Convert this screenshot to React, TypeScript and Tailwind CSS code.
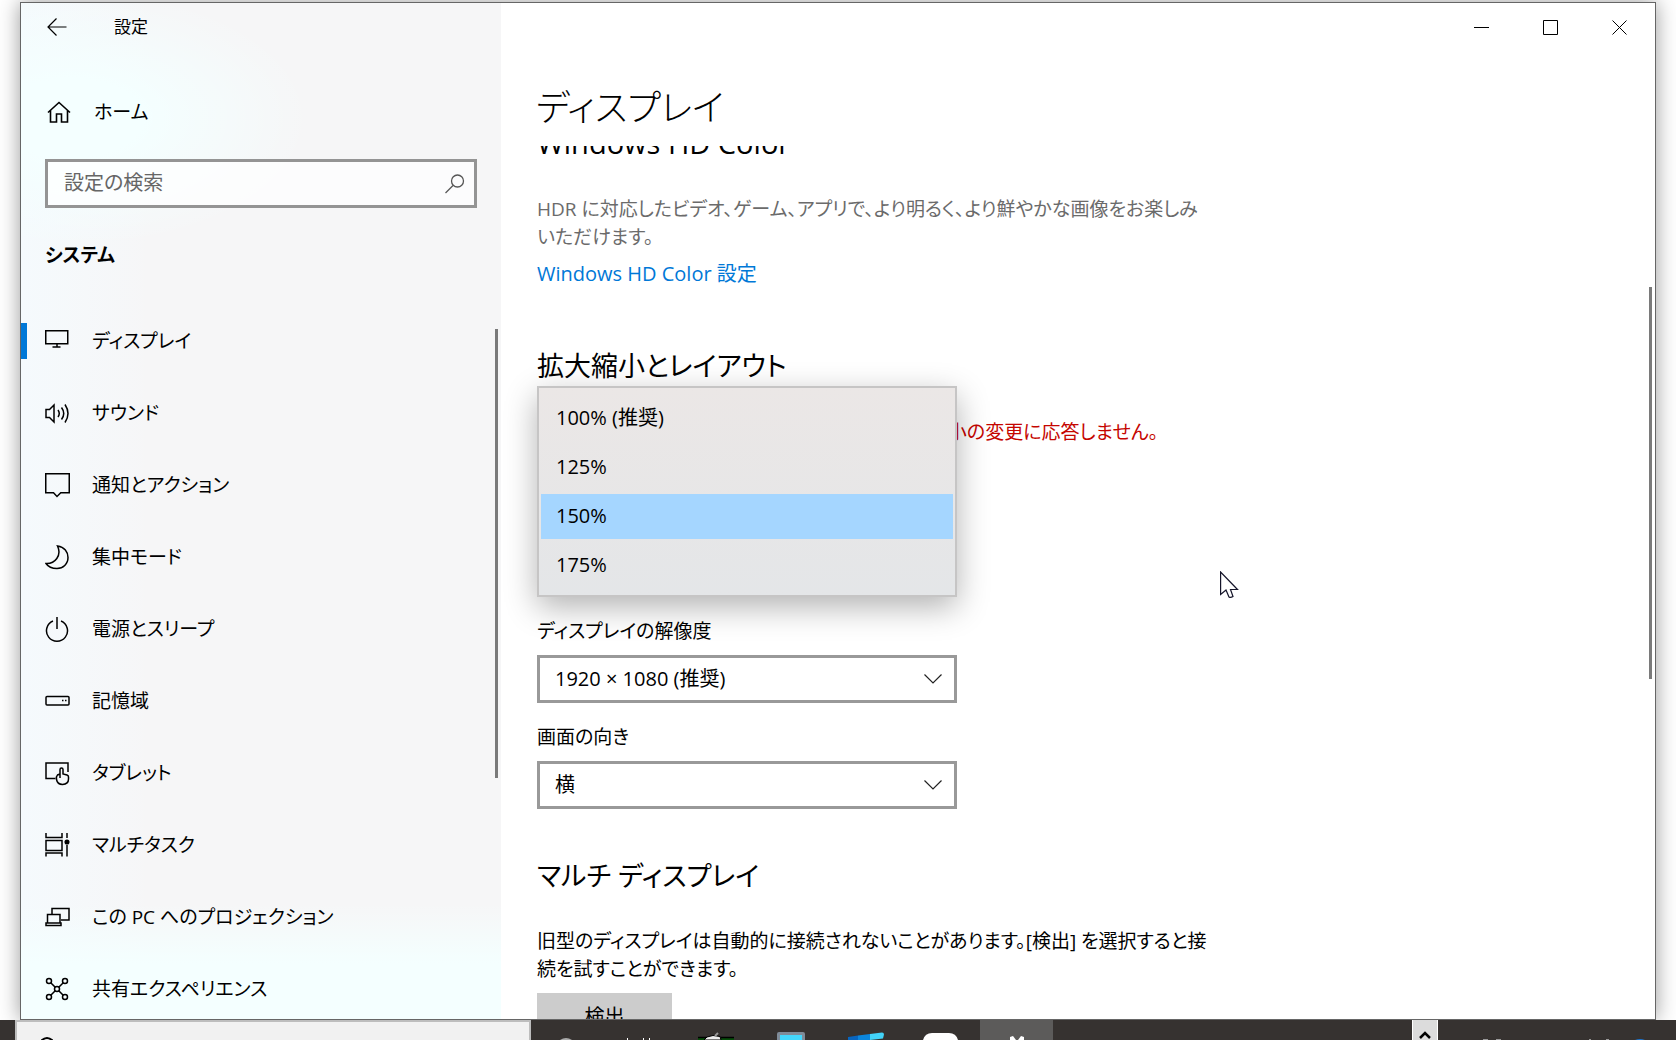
import React from "react";

const nav: [string, React.ReactNode][] = [
  ["ディスプレイ", <><path d="M.75 1.750h22v13h-22zM12 15v3M7.500 18h8" /></>],
  ["サウンド", <><path d="M1 8.500h3.500L9 4v17l-4.500-4.500H1z" /><path d="M13 9q2.500 3.500 0 7M16.500 6.500q4.500 6 0 12M20 3.500q6 9 0 18" /></>],
  ["通知とアクション", <path d="M.75.750h23.500v19h-8.500L12 23.500l-3.500-3.750H.75z" />],
  ["集中モード", <path d="M12.500 1C19.500 2 23 7 23 12.500 23 19 18 23.500 12 23.500 7 23.500 3 21.500 1 18.500 10 19 17 10.500 12.500 1z" />],
  ["電源とスリープ", <path d="M12 0v12M8 4a10.500 10.500 0 1 0 8 0" />],
  ["記憶域", <><rect x="1" y="7.500" width="23" height="8.500" rx="1" /><path d="M17 11.500h1.500M20 11.500h1.500" /></>],
  ["タブレット", <><path d="M10.500 17.500H1V2h22v9" /><path d="M15 17V8.500q0-1.500 1.500-1.500T18 8.500V13l4 1q1.500.5 1.500 2v2q0 5-6 5.500-5 0-6-5-.5-3 1-4.500l2.500-1" /></>],
  ["マルチタスク", <><path d="M1 0v4.500h16V0M1 7.500h16v10H1zM1 23.500V20h16v3.500M22 0v5M22 12v11.500" /><circle cx="22" cy="9" r="1.800" fill="currentColor" /></>],
  ["この PC へのプロジェクション", <><path d="M7 9V3.500h17V15h-8" /><path d="M2.500 18V9.500H15V18M1 18h15v2.500H1z" /></>],
  ["共有エクスペリエンス", <><path d="M5.500 5.500l13 13M18.500 5.500l-13 13" /><g fill="#f7feff"><circle cx="4" cy="4" r="2.500" /><circle cx="20" cy="4" r="2.500" /><circle cx="4" cy="20" r="2.500" /><circle cx="20" cy="20" r="2.500" /><circle cx="12" cy="12" r="2.500" /></g></>],
];

function Icon({ children }: { children: React.ReactNode }) {
  return (
    <svg aria-hidden="true" viewBox="0 0 25 25" className="size-[25px]" fill="none" stroke="currentColor" strokeWidth="1.500">
      {children}
    </svg>
  );
}

function Combo({ id, label, value }: { id: string; label: string; value: string }) {
  return (
    <div className="flex flex-col">
      <label htmlFor={id} className="h-7 text-[19px] leading-7">{label}</label>
      <div className="relative mt-2.5">
        <select id={id} className="block h-12 w-full appearance-none border-[3px] border-[#999] bg-white pl-[15px] outline-none">
          <option>{value}</option>
        </select>
        <svg aria-hidden="true" viewBox="0 0 18 10" className="pointer-events-none absolute right-[15px] top-[19px] h-2.5 w-[18px]" fill="none" stroke="#222" strokeWidth="1.200">
          <path d="M.5.500 9 9l8.500-8.500" />
        </svg>
      </div>
    </div>
  );
}

function Sidebar() {
  return (
    <aside className="flex w-[480px] shrink-0 flex-col bg-[#f6f6f7] bg-[radial-gradient(ellipse_240px_130px_at_50px_115px,#f4ffff_30%,transparent),linear-gradient(to_bottom,transparent_900px,#f4ffff_960px),linear-gradient(to_right,#f5fafd,transparent_130px)]">
      <header className="flex h-12 items-center pl-[26px]">
        <button aria-label="戻る">
          <svg viewBox="0 0 20 18" className="h-[18px] w-5" fill="none" stroke="black" strokeWidth="1.200"><path d="M19.500 9H1M9.500.5 1 9l8.500 8.500" /></svg>
        </button>
        <h1 className="ml-[47px] text-[17px] leading-6">設定</h1>
      </header>
      <a href="#home" className="mt-[37px] flex h-12 items-center gap-[23px] pl-[26px] text-[19px]">
        <svg aria-hidden="true" viewBox="0 0 24 22" className="h-[22px] w-6" fill="none" stroke="black" strokeWidth="1.600"><path d="M1 11.500 12 1.500l11 10M3.500 9.500V21h6v-8h5v8h6V9.500" /></svg>
        ホーム
      </a>
      <div className="relative mx-6 mt-[23px]">
        <input aria-label="設定の検索" placeholder="設定の検索" className="block h-[49px] w-full border-[3px] border-[#949494] bg-white/70 pb-0.5 pl-4 placeholder-[#666] outline-none" />
        <svg aria-hidden="true" viewBox="0 0 20 20" className="absolute right-3 top-[15px] size-5" fill="none" stroke="#555" strokeWidth="1.300"><circle cx="12.500" cy="7" r="6" /><path d="M8 11.500.5 19" /></svg>
      </div>
      <h2 className="mt-[33px] pl-6 text-[19px] font-bold leading-7">システム</h2>
      <div className="mt-9 flex min-h-0 flex-1 items-start">
        <nav className="flex-1 text-[19px]">
          {nav.map(([label, icon], i) => (
            <a key={label} href="#page" aria-current={i === 0 ? "page" : undefined} className="flex h-[72px] items-center">
              <span className={i === 0 ? "h-9 w-1.5 bg-[#0078d7]" : "h-9 w-1.5"} />
              <span className="ml-[18px] mr-[22px]"><Icon>{icon}</Icon></span>
              {label}
            </a>
          ))}
        </nav>
        <div className="mr-[3px] mt-6 h-[449px] w-[3px] bg-[#7a7a7a]" />
      </div>
    </aside>
  );
}

function ScalePopup() {
  return (
    <ul role="listbox" aria-label="拡大縮小" className="absolute inset-x-0 top-0 z-10 flex h-[211px] flex-col gap-1 border-2 border-[#c6c5c5] bg-linear-to-b from-[#ebe7e6] to-[#e4e6e8] px-0.5 pt-2 shadow-[0_10px_30px_rgba(0,0,0,0.3)]">
      {["100% (推奨)", "125%", "150%", "175%"].map((v) => (
        <li key={v} role="option" aria-selected={v === "150%"} className={v === "150%" ? "bg-[#a5d6ff]" : ""}>
          <button className="block h-[45px] w-full pb-0.5 pl-[15px] text-left">{v}</button>
        </li>
      ))}
    </ul>
  );
}

function Content() {
  return (
    <main className="flex min-w-0 flex-1 flex-col bg-white">
      <header className="mr-px flex h-12 justify-end">
        {[
          ["最小化", "M0 7.500h15"],
          ["最大化", "M.5.500h14v14H.5z"],
          ["閉じる", "M.5.500l14 14M14.500.500l-14 14"],
        ].map(([label, d]) => (
          <button key={label} aria-label={label} className="flex w-[69px] items-center justify-center">
            <svg viewBox="0 0 15 15" className="size-[15px]" fill="none" stroke="black"><path d={d} /></svg>
          </button>
        ))}
      </header>
      <h2 className="mt-8 h-[63px] pl-[35px] text-[36px] font-light leading-[50px]">ディスプレイ</h2>
      <div className="flex min-h-0 flex-1 items-start justify-between overflow-hidden">
        <div className="flex flex-col pl-9">
          <h3 className="-mt-[18px] h-[30px] text-[29px] leading-[30px]">Windows HD Color</h3>
          <p className="mt-[37px] text-[19px] leading-7 text-[#6b6b6b]">
            HDR に対応したビデオ、ゲーム、アプリで、より明るく、より鮮やかな画像をお楽しみ
            <br />
            いただけます。
          </p>
          <a href="#hd-color" className="mt-[9px] leading-7 text-[#0078d7]">Windows HD Color 設定</a>
          <h3 className="mt-[58px] text-[27px] leading-10">拡大縮小とレイアウト</h3>
          <div className="relative h-[231px] w-[420px]">
            <p className="w-[621px] whitespace-nowrap pt-8 text-right text-[19px] leading-7 text-[#c50500]">
              小の変更に応答しません。
            </p>
            <ScalePopup />
          </div>
          <div className="flex w-[420px] flex-col gap-5">
            <Combo id="resolution" label="ディスプレイの解像度" value="1920 × 1080 (推奨)" />
            <Combo id="orientation" label="画面の向き" value="横" />
          </div>
          <h3 className="mt-[47px] text-[27px] leading-10">マルチ ディスプレイ</h3>
          <p className="mt-[31px] text-[19px] leading-7">
            旧型のディスプレイは自動的に接続されないことがあります。[検出] を選択すると接
            <br />
            続を試すことができます。
          </p>
          <button className="mt-[10px] h-12 w-[135px] shrink-0 bg-[#ccc]">検出</button>
        </div>
        <div className="mr-[3px] mt-[141px] h-[392px] w-[3px] bg-[#7a7a7a]" />
      </div>
    </main>
  );
}

function Taskbar() {
  return (
    <footer className="z-10 flex h-5 shrink-0 bg-[#363230] text-white">
      <div className="ml-[15px] flex w-[516px] items-end border-2 border-b-0 border-[#bdbdbd] bg-[#f1f1f1] pl-6">
        <svg aria-hidden="true" viewBox="0 0 12 3" className="h-[3px] w-3" fill="none" stroke="black" strokeWidth="2"><path d="M0 4q6-6 12 0" /></svg>
      </div>
      <svg aria-hidden="true" viewBox="0 0 449 20" className="h-5 w-[449px]">
        <path d="M29 20q6-4 12 0z" fill="#aaa" />
        <path d="M96.500 18v2M112.500 18v2M118.500 18v2" stroke="white" />
        <path d="M167 18h36v2h-36z" fill="#064d0a" />
        <path d="M167 17.500h36" stroke="black" strokeWidth="1.500" />
        <path d="M173 20l3-3 6-1.500 7 1 1 3.500z" fill="#eee" stroke="black" />
        <path d="M184 16l3-3" stroke="#999" strokeWidth="2" />
        <path d="M246 20v-6q0-2 2-2h24q2 0 2 2v6z" fill="#7f8b98" />
        <path d="M249 15h22v5h-22z" fill="#44d7fb" />
        <path d="M317 17l10-1.500V20h-10z" fill="#0865bf" />
        <path d="M327 15.500l12-1.500v6h-12z" fill="#0b86dc" />
        <path d="M339 14l12-1.500q2 0 2 2l-1 4-13 1.500z" fill="#42d3f8" />
        <path d="M392 20q2-7 9-7h17q7 0 9 7z" fill="white" />
      </svg>
      <div className="flex w-[73px] items-end justify-center bg-[#5c5b5a]">
        <svg aria-hidden="true" viewBox="0 0 14 4" className="h-1 w-3.5" fill="white"><path d="M0 4V1l3-1 3 4zM8 4l3-4 3 1v3z" /></svg>
      </div>
      <button aria-label="隠れているインジケーター" className="ml-auto flex w-[26px] items-center justify-center border-x border-white bg-[#dcdcdc] pt-2">
        <svg viewBox="0 0 12 9" className="h-[9px] w-3" fill="none" stroke="black" strokeWidth="2.500"><path d="M1 8l5-5 5 5" /></svg>
      </button>
      <svg aria-hidden="true" viewBox="0 0 238 20" className="h-5 w-[238px]">
        <path d="M45 19.500h5M58 19.500h5M151 19.500h2M168 19.500h3" stroke="#999" />
        <path d="M197 20q5-2 10 0z" fill="#1f77d0" />
      </svg>
    </footer>
  );
}

export default function App() {
  return (
    <div className="relative flex h-screen flex-col overflow-hidden bg-white font-['Open_Sans','Noto_Sans_CJK_JP',sans-serif] text-[20px] text-black [font-feature-settings:'palt']">
      <div className="mx-5 mt-0.5 flex min-h-0 flex-1 overflow-hidden border border-[#666] shadow-[0_0_20px_rgba(0,0,0,0.4)]">
        <Sidebar />
        <Content />
      </div>
      <Taskbar />
      <svg aria-hidden="true" viewBox="0 0 19 28" className="absolute left-[1220px] top-[571px] h-7 w-[19px]" fill="white" stroke="#15152a" strokeWidth="1.200">
        <path d="M.6 1v22.500L6 19l3 7q1.500 1 4-.5L10.500 18.500h7z" />
      </svg>
    </div>
  );
}
